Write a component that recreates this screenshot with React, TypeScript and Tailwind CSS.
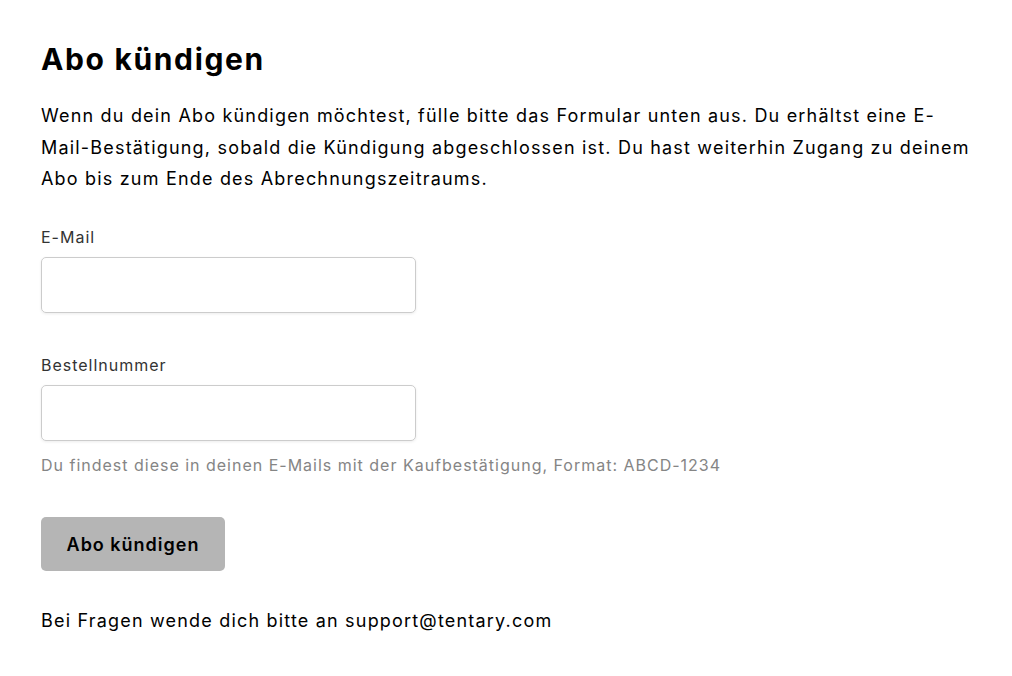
import React from "react";

export default function App() {
  return (
    <div className="min-h-screen bg-white text-black tracking-[0.062em]" style={{ fontFamily: "Inter, 'Liberation Sans', sans-serif" }}>
      <div className="pl-[41px] pt-[40px] w-[975px]">
        <h1 className="text-[30px] leading-[38px] font-bold tracking-[0.055em] text-black">Abo kündigen</h1>
        <p className="mt-[22px] text-[18px] leading-[31.5px] tracking-[0.066em] text-black">
          Wenn du dein Abo kündigen möchtest, fülle bitte das Formular unten aus. Du erhältst eine E-Mail-Bestätigung, sobald die Kündigung abgeschlossen ist. Du hast weiterhin Zugang zu deinem Abo bis zum Ende des Abrechnungszeitraums.
        </p>
        <div className="mt-[30px] flex flex-col">
          <label className="text-[16px] leading-[24px] text-[#333333]">E-Mail</label>
          <input className="mt-[8px] w-[375px] h-[56px] rounded-[5px] border border-[#cccccc] shadow-[0_1px_3px_rgba(0,0,0,0.08)] px-3 text-[16px] outline-none" />
        </div>
        <div className="mt-[40px] flex flex-col">
          <label className="text-[16px] leading-[24px] text-[#333333]">Bestellnummer</label>
          <input className="mt-[8px] w-[375px] h-[56px] rounded-[5px] border border-[#cccccc] shadow-[0_1px_3px_rgba(0,0,0,0.08)] px-3 text-[16px] outline-none" />
          <p className="mt-[12px] text-[16px] leading-[24px] text-[#858585]">
            Du findest diese in deinen E-Mails mit der Kaufbestätigung, Format: ABCD-1234
          </p>
        </div>
        <button className="mt-[40px] w-[184px] h-[54px] rounded-[5px] bg-[#b5b5b5] text-[18px] font-semibold text-black">
          <span className="relative top-[1px]">Abo kündigen</span>
        </button>
        <p className="mt-[36px] text-[18px] leading-[28px] tracking-[0.066em] text-black">
          Bei Fragen wende dich bitte an support@tentary.com
        </p>
      </div>
    </div>
  );
}
